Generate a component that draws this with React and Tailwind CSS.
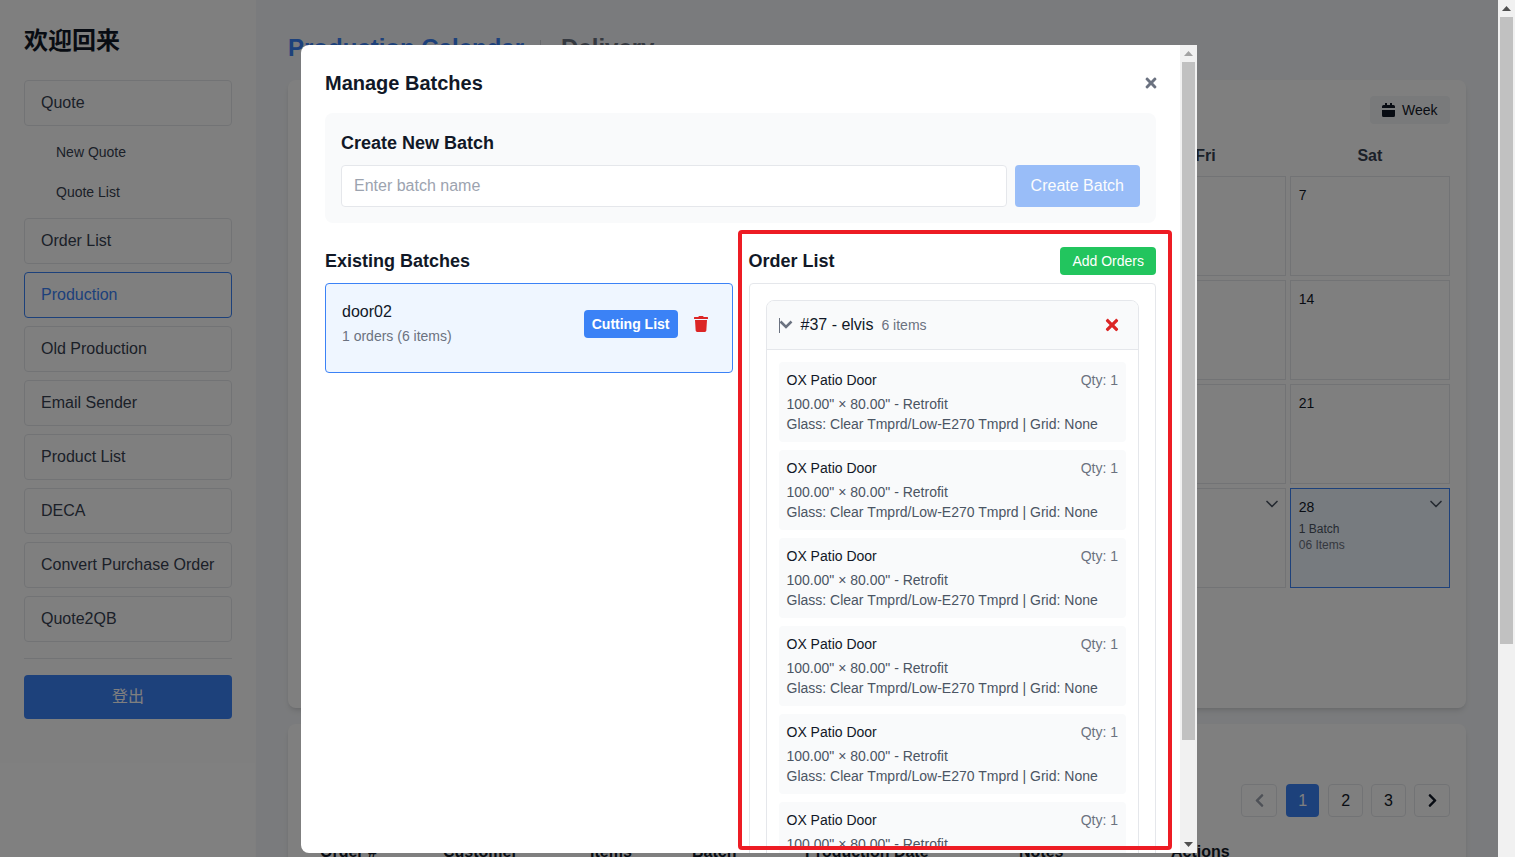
import React from 'react';
import { ChevronDown } from 'lucide-react';
import { FaTimes, FaTrash, FaChevronLeft, FaChevronRight } from 'react-icons/fa';

const days = ['Sun', 'Mon', 'Tue', 'Wed', 'Thu', 'Fri', 'Sat'];
const dates = Array.from({ length: 28 }, (_, i) => i + 1);
const navBtn = 'h-[46px] flex items-center px-4 border border-[#e5e7eb] rounded text-[#374151]';

const NavItem = ({ label, active }) => (
  <div className={active ? 'h-[46px] flex items-center px-4 border border-[#3b82f6] rounded text-[#3b82f6]' : navBtn}>
    {label}
  </div>
);

const Sidebar = () => (
  <aside className="w-64 shrink-0 bg-white p-6">
    <h2 className="h-8 pt-px text-2xl font-bold text-[#111827] mb-6">欢迎回来</h2>
    <nav className="flex flex-col gap-2">
      <NavItem label="Quote" />
      <div className="flex flex-col gap-1">
        <div className="h-9 flex items-center pl-8 text-sm text-[#374151]">New Quote</div>
        <div className="h-9 flex items-center pl-8 text-sm text-[#374151]">Quote List</div>
      </div>
      <NavItem label="Order List" />
      <NavItem label="Production" active />
      <NavItem label="Old Production" />
      <NavItem label="Email Sender" />
      <NavItem label="Product List" />
      <NavItem label="DECA" />
      <NavItem label="Convert Purchase Order" />
      <NavItem label="Quote2QB" />
    </nav>
    <div className="border-t border-[#e5e7eb] mt-4 pt-4">
      <button className="w-full h-11 rounded bg-[#3b82f6] text-white">登出</button>
    </div>
  </aside>
);

const Calendar = () => (
  <section className="h-[628px] bg-white rounded-lg shadow-md p-4">
    <div className="flex justify-end">
      <div className="h-7 w-20 flex items-center gap-[7px] px-3 rounded bg-[#f3f4f6] text-sm text-[#111827]">
        <svg width="13" height="14" viewBox="0 0 13 14" className="shrink-0">
          <path fill="#111827" d="M3 0h2v2h3V0h2v2h1.500A1.500 1.500 0 0 1 13 3.500V5H0V3.500A1.500 1.500 0 0 1 1.500 2H3zM0 7h13v5.500a1.500 1.500 0 0 1-1.500 1.500h-10A1.500 1.500 0 0 1 0 12.500z" />
        </svg>
        Week
      </div>
    </div>
    <div className="grid grid-cols-7 gap-1 mt-5 mb-2">
      {days.map((d) => (
        <div key={d} className="h-6 text-center font-bold text-[#374151]">{d}</div>
      ))}
    </div>
    <div className="grid grid-cols-7 gap-1">
      {dates.map((n) => (
        <div
          key={n}
          className={
            n === 28
              ? 'relative h-[100px] border border-[#3b82f6] bg-[#eff6ff] p-2 text-sm text-[#111827]'
              : 'relative h-[100px] border border-[#e5e7eb] bg-white p-2 text-sm text-[#111827]'
          }
        >
          {n}
          {n >= 27 && <ChevronDown size={20} className="absolute top-[5px] right-[3px] text-[#4b5563]" />}
          {n === 28 && (
            <div className="mt-1 text-xs">
              <div className="text-[#4b5563]">1 Batch</div>
              <div className="text-[#6b7280]">06 Items</div>
            </div>
          )}
        </div>
      ))}
    </div>
  </section>
);

const Orders = () => (
  <section className="mt-4 bg-white rounded-lg shadow-md p-4 pb-10">
    <div className="mt-11 flex justify-end gap-2 text-[#111827]">
      <div className="w-9 h-[33px] mr-px flex items-center justify-center border border-[#e5e7eb] rounded text-[#9ca3af]">
        <FaChevronLeft size={15} />
      </div>
      <div className="h-[33px] mr-px px-3 flex items-center bg-[#3b82f6] text-white rounded">1</div>
      <div className="h-[33px] px-3 flex items-center border border-[#e5e7eb] rounded">2</div>
      <div className="h-[33px] px-3 flex items-center border border-[#e5e7eb] rounded">3</div>
      <div className="w-9 h-[33px] flex items-center justify-center border border-[#e5e7eb] rounded">
        <FaChevronRight size={15} />
      </div>
    </div>
    <div className="mt-[23px] px-4 flex font-bold text-[#111827]">
      <div className="w-[123px]">Order #</div>
      <div className="w-[147px]">Customer</div>
      <div className="w-[102px]">Items</div>
      <div className="w-[113px]">Batch</div>
      <div className="w-[214px]">Production Date</div>
      <div className="w-[152px]">Notes</div>
      <div>Actions</div>
    </div>
  </section>
);

const OrderItem = () => (
  <div className="bg-[#f9fafb] rounded px-2 py-2 text-sm">
    <div className="flex justify-between mb-1">
      <span className="text-[#111827]">OX Patio Door</span>
      <span className="text-[#6b7280]">Qty: 1</span>
    </div>
    <div className="text-[#4b5563]">100.00" × 80.00" - Retrofit</div>
    <div className="text-[#4b5563]">Glass: Clear Tmprd/Low-E270 Tmprd | Grid: None</div>
  </div>
);

const ScrollArrow = ({ up, color }) => (
  <div className="h-[17px] flex items-center justify-center">
    <svg width="9" height="5" viewBox="0 0 9 5">
      <polygon fill={color} points={up ? '4.500,0 9,5 0,5' : '0,0 9,0 4.500,5'} />
    </svg>
  </div>
);

const Modal = () => (
  <div className="w-[896px] h-[808px] bg-white rounded-l-lg overflow-hidden flex">
    <div className="flex-1 min-w-0 p-6">
      <div className="flex items-center justify-between mb-4">
        <h3 className="text-xl font-bold text-[#111827]">Manage Batches</h3>
        <FaTimes size={16} className="-mr-[3px] text-[#6b7280]" />
      </div>

      <div className="bg-[#f9fafb] rounded-lg p-4">
        <h4 className="text-lg font-bold text-[#111827] mb-2">Create New Batch</h4>
        <div className="flex gap-2">
          <input
            type="text"
            placeholder="Enter batch name"
            className="flex-1 h-[42px] px-3 bg-white border border-[#e5e7eb] rounded placeholder:text-[#9ca3af]"
          />
          <button disabled className="h-[42px] px-4 rounded bg-[#3b82f6] text-white opacity-50">Create Batch</button>
        </div>
      </div>

      <div className="grid grid-cols-2 gap-4 mt-6">
        <div>
          <h4 className="text-lg font-bold text-[#111827] mb-2 h-7">Existing Batches</h4>
          <div className="border border-[#3b82f6] bg-[#eff6ff] rounded pt-4 pb-6 pl-4 pr-2">
            <div className="h-12 flex items-center justify-between">
              <div className="self-start">
                <div className="text-[#111827]">door02</div>
                <div className="text-sm text-[#6b7280] mt-[2px]">1 orders (6 items)</div>
              </div>
              <div className="flex items-center">
                <button className="h-7 px-2 rounded bg-[#3b82f6] text-white text-sm font-bold">Cutting List</button>
                <FaTrash size={16} className="text-[#dc2626] -mt-px ml-[15px] mr-[15px]" />
              </div>
            </div>
          </div>
        </div>

        <div>
          <div className="flex items-center justify-between mb-2">
            <h4 className="text-lg font-bold text-[#111827]">Order List</h4>
            <button className="h-7 px-3 rounded bg-[#22c55e] text-white text-sm">Add Orders</button>
          </div>
          <div className="border border-[#e5e7eb] rounded p-4">
            <div className="border border-[#e5e7eb] rounded-lg overflow-hidden">
              <div className="h-[49px] px-3 flex items-center bg-[#f9fafb] border-b border-[#e5e7eb]">
                <svg width="14" height="16" viewBox="0 0 14 16" className="mr-2 text-[#6b7280]">
                  <path d="M0.500 1v15" stroke="currentColor" fill="none" />
                  <path d="M1.500 4.500L7 10l5.500-5.500" stroke="currentColor" strokeWidth="2.500" fill="none" />
                </svg>
                <span className="text-[#111827]">#37 - elvis</span>
                <span className="ml-2 text-sm text-[#6b7280]">6 items</span>
                <FaTimes size={18} className="ml-auto -mt-px mr-[5px] text-[#dc2626]" />
              </div>
              <div className="p-3 flex flex-col gap-2">
                <OrderItem />
                <OrderItem />
                <OrderItem />
                <OrderItem />
                <OrderItem />
                <OrderItem />
              </div>
            </div>
          </div>
        </div>
      </div>
    </div>

    <div className="w-[17px] shrink-0 bg-[#f1f1f1] flex flex-col">
      <ScrollArrow up color="#a3a3a3" />
      <div className="h-[678px] mx-[2px] bg-[#c1c1c1]" />
      <div className="mt-auto">
        <ScrollArrow color="#505050" />
      </div>
    </div>
  </div>
);

export default function App() {
  return (
    <div className="relative h-screen overflow-hidden flex font-['Liberation_Sans','Noto_Sans_CJK_SC',sans-serif]">
      <div className="flex-1 min-w-0 flex bg-[#f5f7fa]">
        <Sidebar />
        <main className="flex-1 min-w-0 p-8">
          <div className="flex items-center h-8 mb-4 text-2xl font-bold">
            <span className="text-[#3b82f6]">Production Calendar</span>
            <span className="ml-4 mr-5 w-px h-4 bg-[#d1d5db]" />
            <span className="text-[#6b7280]">Delivery</span>
          </div>
          <Calendar />
          <Orders />
        </main>
      </div>

      <div className="w-[17px] shrink-0 bg-[#f1f1f1] flex flex-col">
        <ScrollArrow up color="#505050" />
        <div className="h-[627px] mx-[2px] bg-[#c1c1c1]" />
      </div>

      <div className="absolute inset-y-0 left-0 right-[17px] bg-black/50 pt-[45px] flex justify-center items-start">
        <Modal />
      </div>

      {/* red annotation frame */}
      <div className="absolute left-[738px] top-[230px] w-[434px] h-[620px] border-4 border-[#ed1c24] rounded-sm pointer-events-none" />
    </div>
  );
}
